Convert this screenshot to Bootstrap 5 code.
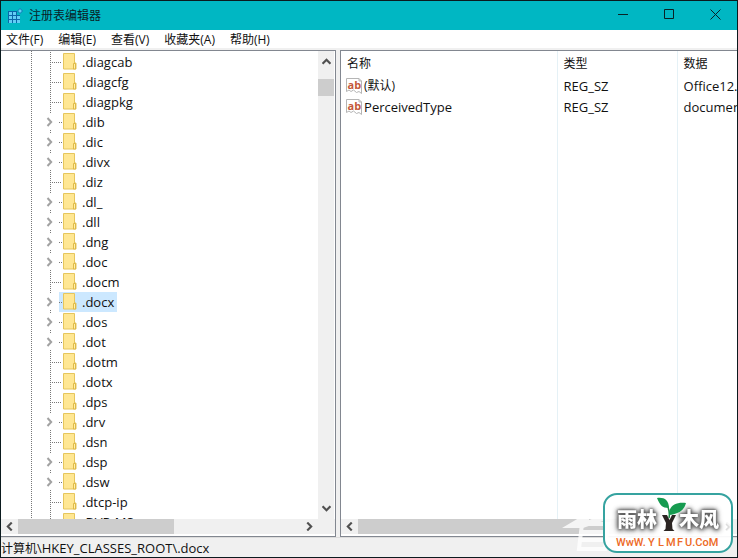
<!DOCTYPE html>
<html lang="zh-CN">
<head>
<meta charset="utf-8">
<meta name="viewport" content="width=device-width, initial-scale=1">
<title>注册表编辑器</title>
<link href="https://cdn.jsdelivr.net/npm/bootstrap@5.3.0/dist/css/bootstrap.min.css" rel="stylesheet">
<style>
  body { font-family: "Open Sans", "Noto Sans CJK SC", sans-serif; font-size: 13px; line-height: 20px; color: #111; }
  button { background: none; border: 0; padding: 0; color: inherit; line-height: inherit; }
  a { color: inherit; text-decoration: none; }
  svg { display: block; flex: none; }
  .zh { font-size: 12px; }
  .app-window { border: 1px solid #0b1a1e; background: #f0f0f0; }
  .titlebar { background: #00b7c3; height: 29px; padding-left: 6px; }
  .titlebar h1 { font-size: 12px; line-height: 20px; margin: 0 0 0 6px; font-weight: 400; color: #0a2226; }
  .win-btn { width: 46px; height: 28px; padding: 0 0 2px 2px; display: flex; align-items: center; justify-content: center; }
  .menus { height: 20px; gap: 15px; padding-left: 5px; border-bottom: 2px solid #f0f0f0; font-size: 12px; }
  .menus button { line-height: 20px; }
  .panes { gap: 4px; }
  .pane { border: 1px solid #828790; min-width: 0; background: #fff; overflow: hidden; }
  .tree-pane { flex: 335 1 0; border-left: 0; }
  .value-pane { flex: 397 1 0; border-right: 0; }
  .tree { padding-top: 1px; height: 0; min-height: 100%; overflow: hidden;
    background: repeating-linear-gradient(#777 0 1px, transparent 1px 2px) 30px 0 / 1px 100% no-repeat; }
  .node { height: 20px; padding-left: 44px; display: flex; align-items: center;
    background: repeating-linear-gradient(#777 0 1px, transparent 1px 2px) 49px 0 / 1px 100% no-repeat,
                repeating-linear-gradient(90deg, #777 0 1px, transparent 1px 2px) 51px 10px / 10px 1px no-repeat; }
  .node a { margin-left: 14px; padding: 0 3px 0 4px; height: 20px; display: flex; align-items: center; gap: 5px; line-height: 18px; }
  .node a svg { margin-bottom: 1px; }
  .parent { background: linear-gradient(#fff, #fff) 44px 2px / 12px 16px no-repeat,
                repeating-linear-gradient(#777 0 1px, transparent 1px 2px) 49px 0 / 1px 100% no-repeat; }
  .parent button { width: 9px; }
  .parent a { margin-left: 5px; background: repeating-linear-gradient(90deg, #777 0 1px, transparent 1px 2px) 0 10px / 3px 1px no-repeat; }
  .parent a.selected { background-color: #cce8ff; }
  .scroll-v { width: 17px; background: #f0f0f0; border-right: 1px solid #fff; padding: 6px 0; }
  .scroll-v .thumb { width: 16px; height: 17px; background: #cdcdcd; margin-top: 13px; }
  .scroll-h { height: 17px; background: #f0f0f0; border-bottom: 2px solid #fff; }
  .scroll-h .thumb { height: 15px; background: #cdcdcd; }
  .arrow-h { width: 17px; height: 15px; display: flex; align-items: center; justify-content: center; }
  .corner { width: 17px; }
  .value-list { table-layout: fixed; width: 100%; height: 100%; border-collapse: collapse; }
  .value-list th, .value-list td { font-weight: 400; height: 21px; padding: 0 0 1px 6px; white-space: nowrap; overflow: hidden; line-height: 20px; }
  .value-list th { height: 25px; font-size: 12px; padding: 0 0 0 6px; }
  .value-list th + th, .value-list td + td { border-left: 1px solid #e5f1f6; }
  .value-list td:first-child { padding-left: 5px; }
  .value-list .rest td { height: auto; }
  .value-name { display: flex; align-items: center; gap: 2px; }
  .col-name { width: 216px; } .col-type { width: 120px; }
  .status { height: 20px; line-height: 20px; border-top: 1px solid #dcdcdc; }
  .seal { position: absolute; right: 4px; bottom: 3px; pointer-events: none; }
  .halo { filter: drop-shadow(0 0 1px #555) drop-shadow(0 0 2px #666) drop-shadow(0 1px 2px #888); }
</style>
</head>
<body>
<svg class="d-none" aria-hidden="true">
  <symbol id="folder" viewBox="0 0 14 17"><path d="M.5.5h11v9.500h1.500v6h-1.500H.5z" fill="#ffe793" stroke="#e6c65c"/><path d="M10.500 16v-5.500h2V16z" fill="#fff0ae" stroke="#dfba48"/></symbol>
  <symbol id="chev" viewBox="0 0 9 10"><path d="M2.500 1l3.700 4-3.700 4" fill="none" stroke="#a2a2a2" stroke-width="2"/></symbol>
  <symbol id="left" viewBox="0 0 8 8"><path d="M6 .5L2.500 4 6 7.500" fill="none" stroke="#505050" stroke-width="1.900"/></symbol>
  <symbol id="right" viewBox="0 0 8 8"><path d="M2 .5L5.500 4 2 7.500" fill="none" stroke="#505050" stroke-width="1.900"/></symbol>
  <symbol id="up" viewBox="0 0 8 8"><path d="M.5 6L4 2.500 7.500 6" fill="none" stroke="#505050" stroke-width="1.900"/></symbol>
  <symbol id="down" viewBox="0 0 8 8"><path d="M.5 2L4 5.500 7.500 2" fill="none" stroke="#505050" stroke-width="1.900"/></symbol>
  <symbol id="string" viewBox="0 0 16 16"><path d="M.5.5h12.500l2.500 2.500v12.500l-2.500-2-2.500 1-3-2.500-2.500 1.500-2-1.500-2.500 1.500z" fill="#fff" stroke="#b5b5b5"/><path d="M13 .5V3h2.500" fill="none" stroke="#b5b5b5"/><text x="1.500" y="10.500" font-family="Open Sans, sans-serif" font-size="11" font-weight="700" fill="#c4583b">ab</text></symbol>
</svg>

<div class="app-window vh-100 d-flex flex-column overflow-hidden position-relative">
  <header class="titlebar d-flex align-items-center">
    <svg width="16" height="16" viewBox="0 0 16 16" aria-hidden="true">
      <path d="M1 3h12v12H1z" fill="#0a67a8"/>
      <path d="M2 4h3v3H2zM6 4h3v3H6zM2 8h3v3H2zM6 8h3v3H6zM10 8h3v3h-3zM2 12h3v3H2zM6 12h3v3H6zM10 12h3v3h-3z" fill="#63cdf5"/>
      <path d="M10 2.500h3.500V7H10z" fill="#00b7c3"/><path d="M13 .5l2.500 2.500L13 5.500 10.500 3z" fill="#63cdf5" stroke="#0a78b4"/>
    </svg>
    <h1 class="flex-grow-1">注册表编辑器</h1>
    <button class="win-btn" aria-label="最小化"><svg width="11" height="11"><path d="M0 5.500h10" stroke="#0a2226"/></svg></button>
    <button class="win-btn" aria-label="最大化"><svg width="11" height="11"><path d="M.5.500h9v9h-9z" fill="none" stroke="#0a2226"/></svg></button>
    <button class="win-btn" aria-label="关闭"><svg width="11" height="11"><path d="M.5.500l10 10m0-10l-10 10" stroke="#0a2226"/></svg></button>
  </header>

  <nav class="menus d-flex bg-white flex-shrink-0" aria-label="菜单">
    <button>文件(F)</button><button>编辑(E)</button><button>查看(V)</button><button>收藏夹(A)</button><button>帮助(H)</button>
  </nav>

  <main class="panes d-flex flex-grow-1 overflow-hidden">
    <section class="pane tree-pane d-flex flex-column" aria-label="注册表项">
      <div class="d-flex flex-grow-1 overflow-hidden">
        <ul class="tree list-unstyled m-0 flex-grow-1">
          <li class="node"><a href="#"><svg width="14" height="17"><use href="#folder"/></svg>.diagcab</a></li>
          <li class="node"><a href="#"><svg width="14" height="17"><use href="#folder"/></svg>.diagcfg</a></li>
          <li class="node"><a href="#"><svg width="14" height="17"><use href="#folder"/></svg>.diagpkg</a></li>
          <li class="node parent"><button aria-label="展开 .dib"><svg width="9" height="10"><use href="#chev"/></svg></button><a href="#"><svg width="14" height="17"><use href="#folder"/></svg>.dib</a></li>
          <li class="node parent"><button aria-label="展开 .dic"><svg width="9" height="10"><use href="#chev"/></svg></button><a href="#"><svg width="14" height="17"><use href="#folder"/></svg>.dic</a></li>
          <li class="node parent"><button aria-label="展开 .divx"><svg width="9" height="10"><use href="#chev"/></svg></button><a href="#"><svg width="14" height="17"><use href="#folder"/></svg>.divx</a></li>
          <li class="node"><a href="#"><svg width="14" height="17"><use href="#folder"/></svg>.diz</a></li>
          <li class="node parent"><button aria-label="展开 .dl_"><svg width="9" height="10"><use href="#chev"/></svg></button><a href="#"><svg width="14" height="17"><use href="#folder"/></svg>.dl_</a></li>
          <li class="node parent"><button aria-label="展开 .dll"><svg width="9" height="10"><use href="#chev"/></svg></button><a href="#"><svg width="14" height="17"><use href="#folder"/></svg>.dll</a></li>
          <li class="node parent"><button aria-label="展开 .dng"><svg width="9" height="10"><use href="#chev"/></svg></button><a href="#"><svg width="14" height="17"><use href="#folder"/></svg>.dng</a></li>
          <li class="node parent"><button aria-label="展开 .doc"><svg width="9" height="10"><use href="#chev"/></svg></button><a href="#"><svg width="14" height="17"><use href="#folder"/></svg>.doc</a></li>
          <li class="node"><a href="#"><svg width="14" height="17"><use href="#folder"/></svg>.docm</a></li>
          <li class="node parent"><button aria-label="展开 .docx"><svg width="9" height="10"><use href="#chev"/></svg></button><a href="#" class="selected" aria-current="true"><svg width="14" height="17"><use href="#folder"/></svg>.docx</a></li>
          <li class="node parent"><button aria-label="展开 .dos"><svg width="9" height="10"><use href="#chev"/></svg></button><a href="#"><svg width="14" height="17"><use href="#folder"/></svg>.dos</a></li>
          <li class="node parent"><button aria-label="展开 .dot"><svg width="9" height="10"><use href="#chev"/></svg></button><a href="#"><svg width="14" height="17"><use href="#folder"/></svg>.dot</a></li>
          <li class="node"><a href="#"><svg width="14" height="17"><use href="#folder"/></svg>.dotm</a></li>
          <li class="node"><a href="#"><svg width="14" height="17"><use href="#folder"/></svg>.dotx</a></li>
          <li class="node"><a href="#"><svg width="14" height="17"><use href="#folder"/></svg>.dps</a></li>
          <li class="node parent"><button aria-label="展开 .drv"><svg width="9" height="10"><use href="#chev"/></svg></button><a href="#"><svg width="14" height="17"><use href="#folder"/></svg>.drv</a></li>
          <li class="node"><a href="#"><svg width="14" height="17"><use href="#folder"/></svg>.dsn</a></li>
          <li class="node parent"><button aria-label="展开 .dsp"><svg width="9" height="10"><use href="#chev"/></svg></button><a href="#"><svg width="14" height="17"><use href="#folder"/></svg>.dsp</a></li>
          <li class="node parent"><button aria-label="展开 .dsw"><svg width="9" height="10"><use href="#chev"/></svg></button><a href="#"><svg width="14" height="17"><use href="#folder"/></svg>.dsw</a></li>
          <li class="node"><a href="#"><svg width="14" height="17"><use href="#folder"/></svg>.dtcp-ip</a></li>
          <li class="node"><a href="#"><svg width="14" height="17"><use href="#folder"/></svg>.DVR-MS</a></li>
        </ul>
        <div class="scroll-v d-flex flex-column align-items-center" aria-hidden="true">
          <svg width="9" height="9"><use href="#up"/></svg>
          <div class="thumb"></div>
          <svg class="mt-auto" width="9" height="9"><use href="#down"/></svg>
        </div>
      </div>
      <div class="scroll-h d-flex flex-shrink-0" aria-hidden="true">
        <div class="arrow-h"><svg width="9" height="9"><use href="#left"/></svg></div>
        <div class="flex-grow-1"><div class="thumb" style="width:55%"></div></div>
        <div class="arrow-h"><svg width="9" height="9"><use href="#right"/></svg></div>
        <div class="corner"></div>
      </div>
    </section>

    <section class="pane value-pane d-flex flex-column" aria-label="值">
      <div class="flex-grow-1 overflow-hidden">
        <table class="value-list">
          <colgroup><col class="col-name"><col class="col-type"><col></colgroup>
          <thead><tr><th scope="col">名称</th><th scope="col">类型</th><th scope="col">数据</th></tr></thead>
          <tbody>
            <tr><td><span class="value-name"><svg width="16" height="16"><use href="#string"/></svg><span class="zh">(默认)</span></span></td><td>REG_SZ</td><td>Office12.W</td></tr>
            <tr><td><span class="value-name"><svg width="16" height="16"><use href="#string"/></svg>PerceivedType</span></td><td>REG_SZ</td><td>document</td></tr>
            <tr class="rest"><td></td><td></td><td></td></tr>
          </tbody>
        </table>
      </div>
      <div class="scroll-h d-flex flex-shrink-0" aria-hidden="true">
        <div class="arrow-h"><svg width="9" height="9"><use href="#left"/></svg></div>
        <div class="flex-grow-1"><div class="thumb" style="width:75%"></div></div>
        <div class="arrow-h"><svg width="9" height="9"><use href="#right"/></svg></div>
      </div>
    </section>
  </main>

  <footer class="status flex-shrink-0"><span class="zh">计算机</span>\HKEY_CLASSES_ROOT\.docx</footer>

  <svg class="seal" width="172" height="61" viewBox="0 0 172 61" role="img" aria-label="雨林木风 WwW.YLMFU.CoM">
    <g opacity=".8"><path d="M1 35L28 19v8l14-5v6L22 35z" fill="#fff"/><path d="M21 31l-3 25h26l3-25zM21 39h24M20 47h25" fill="none" stroke="#fff" stroke-width="4"/></g>
    <rect x="43" y="1" width="128" height="58" rx="13" fill="#fff" fill-opacity=".94" stroke="#36a3a0" stroke-width="2"/>
    <path d="M165 31l3 3-3 3" fill="none" stroke="#ddd" stroke-width="1.500"/>
    <g class="halo" font-family="Noto Sans CJK SC, sans-serif" font-size="20" font-weight="900" fill="#fff"><text x="56" y="34">雨林</text><text x="118" y="34">木风</text></g>
    <path d="M101 22h5l2.500 5 2.500-5h4l-4 8 .5 6 2 2h-11l2-2 .5-6z" fill="#2b2422"/>
    <path d="M108 25c1-5 0-9-2-13" fill="none" stroke="#1c8a45" stroke-width="1.500"/>
    <path d="M96 5c7-1 12 2 12 10-7 0-9-3-12-10zM108 22c0-10 7-13 17-12-2 8-8 11-17 12z" fill="#169b50"/>
    <g font-family="Roboto, sans-serif" font-size="11" font-weight="500" fill="#ed6a26"><text x="55" y="53">WwW.</text><text x="87" y="53">Y</text><text x="97" y="53">L</text><text x="105" y="53">M</text><text x="116" y="53">F</text><text x="124" y="53">U.CoM</text></g>
  </svg>
</div>
<script src="https://cdn.jsdelivr.net/npm/bootstrap@5.3.0/dist/js/bootstrap.bundle.min.js"></script>
</body>
</html>
